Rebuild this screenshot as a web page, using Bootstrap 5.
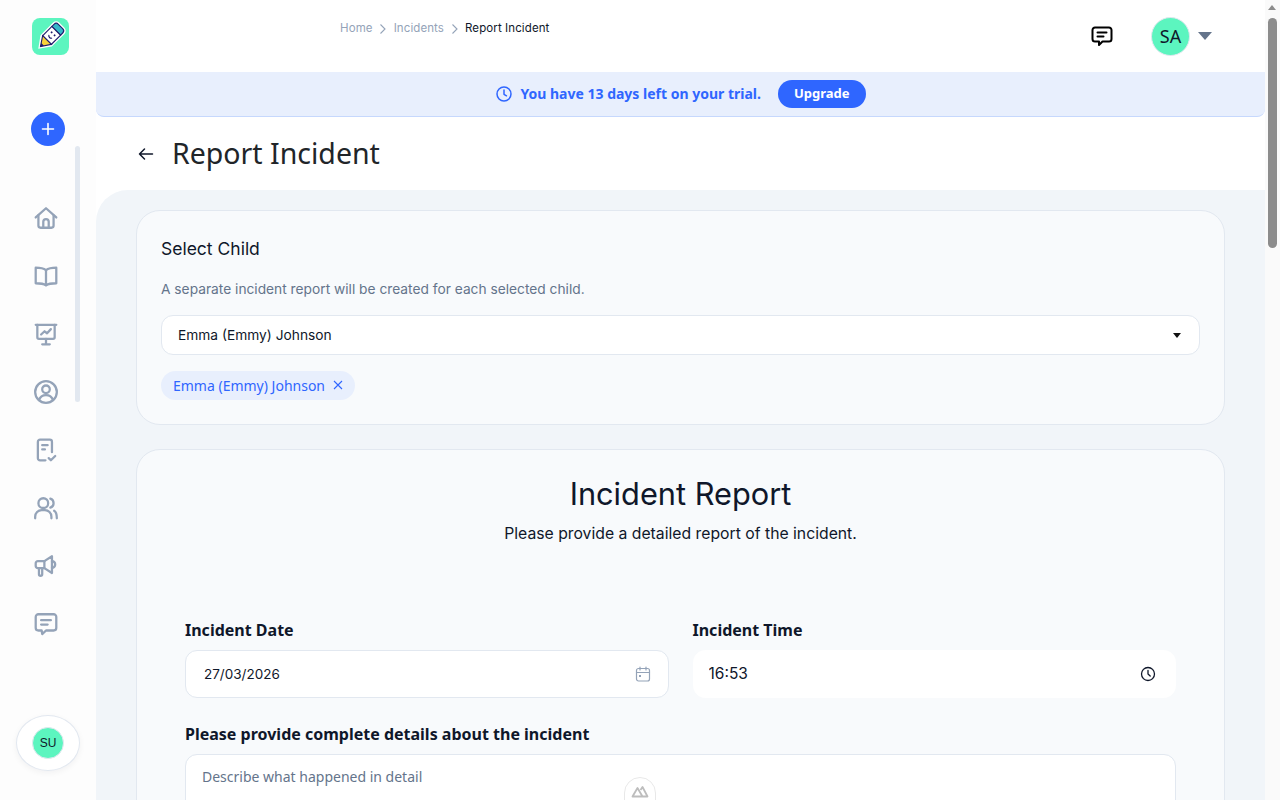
<!DOCTYPE html>
<html lang="en">
<head>
    <meta charset="UTF-8" />
    <meta name="viewport" content="width=device-width, initial-scale=1" />
    <title>Report Incident</title>
    <link rel="stylesheet" href="https://cdn.jsdelivr.net/npm/bootstrap@5.3.0/dist/css/bootstrap.min.css" />
    <style>
        body {
          background: #fff;
          font-family: 'Noto Sans', sans-serif;
          color: #0f172a;
          padding-right: 15px;
        }

        .rail {
          width: 96px;
          height: 100vh;
          position: sticky;
          top: 0;
          background: #fdfdfd;
          flex-shrink: 0;
        }

        .rail-logo {
          width: 37px;
          height: 37px;
          margin: 18px 0 0 32px;
          border-radius: 8px;
          background: #5cf5bf;
        }

        .rail-add {
          width: 34px;
          height: 34px;
          margin: 57px 0 0 31px;
          border: 0;
          border-radius: 50%;
          background: #2f66ff;
        }

        .rail-track {
          position: absolute;
          left: 75px;
          top: 146px;
          width: 5px;
          height: 256px;
          border-radius: 3px;
          background: #e2e8f0;
        }

        .rail-icons {
          margin-top: 59px;
          padding-left: 33px;
          gap: 32px;
        }

        .rail-icons svg {
          width: 26px;
          height: 26px;
          display: block;
          fill: none;
          stroke: #94a3b8;
          stroke-width: 2.1;
          stroke-linecap: round;
          stroke-linejoin: round;
        }

        .rail-user {
          position: absolute;
          left: 16px;
          top: 715px;
          width: 64px;
          height: 56px;
          border: 1px solid #e2e8f0;
          border-radius: 50%;
          background: #fff;
          box-shadow: 0 2px 6px rgba(15, 23, 42, 0.05);
        }

        .mint-dot {
          border-radius: 50%;
          background: #5cf5bf;
          color: #0f172a;
          border: 1px solid #e2e8f0;
        }

        .mint-sm {
          width: 32px;
          height: 32px;
          font: 12px 'Liberation Sans', sans-serif;
        }

        .mint-lg {
          width: 39px;
          height: 39px;
          font-size: 18px;
        }

        .main-col {
          min-width: 0;
        }

        .topbar {
          height: 72px;
          padding-left: 244px;
        }

        .crumbs {
          font-family: Inter, sans-serif;
          font-size: 11.5px;
          letter-spacing: .1px;
          color: #94a3b8;
          margin-top: -16px;
          padding-top: 2px;
          gap: 3.5px;
        }

        .crumbs b {
          font-weight: 400;
          color: #0f172a;
        }

        .topbar-tools {
          margin-left: auto;
          padding-right: 53px;
        }

        .chat-top {
          margin-right: 37px;
        }

        .caret-down {
          width: 0;
          height: 0;
          border-left: 7px solid transparent;
          border-right: 7px solid transparent;
          border-top: 8px solid #64748b;
          margin-left: 8px;
        }

        .trial {
          height: 45px;
          padding-left: 1px;
          background: #e8effd;
          border-bottom: 1px solid #c6d8fd;
          border-radius: 0 0 8px 8px;
          color: #2f66ff;
          font-size: 14px;
          font-weight: 700;
        }

        .trial span {
          margin-top: -1px;
        }

        .btn-upgrade {
          --bs-btn-bg: #2f66ff;
          --bs-btn-color: #fff;
          --bs-btn-hover-bg: #2f66ff;
          --bs-btn-hover-color: #fff;
          --bs-btn-border-width: 0;
          --bs-btn-padding-x: 16px;
          --bs-btn-padding-y: 0;
          --bs-btn-font-size: 13px;
          --bs-btn-font-weight: 700;
          --bs-btn-border-radius: 14px;
          height: 28px;
          margin-left: 17px;
        }

        .page-head {
          height: 73px;
          padding-left: 42px;
        }

        .page-head h1 {
          font-size: 28.5px;
          font-weight: 400;
          color: #212529;
          margin: 0 0 0 18px;
        }

        .panel {
          background: #f1f5f9;
          border-radius: 32px 0 0 0;
          padding: 20px 40px 40px;
        }

        .sheet {
          background: #f8fafc;
          border: 1px solid #e2e8f0;
          border-radius: 24px;
        }

        .sheet-child {
          height: 215px;
          padding: 27px 24px 0;
          margin-bottom: 24px;
        }

        .sheet-form {
          min-height: 2150px;
          padding: 24px 48px;
        }

        .dm {
          font-family: Inter, sans-serif;
        }

        .sheet-title {
          font-size: 17.5px;
          font-weight: 400;
          margin: 0;
        }

        .sheet-hint {
          font-size: 13.75px;
          color: #64748b;
          margin: 20px 0 15px;
        }

        .field-box {
          height: 40px;
          padding: 1px 16px 0;
          background: #fff;
          border: 1px solid #e2e8f0;
          border-radius: 12px;
          font-size: 13.75px;
        }

        .caret-small {
          width: 0;
          height: 0;
          border-left: 4px solid transparent;
          border-right: 4px solid transparent;
          border-top: 5px solid #111;
          margin-right: 2px;
        }

        .chip-child {
          height: 29px;
          margin-top: 16px;
          padding: 0 12px;
          border-radius: 15px;
          background: #e8effd;
          color: #2f66ff;
          font-size: 14px;
          gap: 8px;
        }

        .form-title {
          font-size: 30.75px;
          font-weight: 400;
          line-height: 40px;
          margin: 0;
          text-align: center;
        }

        .form-sub {
          font-size: 15.75px;
          text-align: center;
          margin: 8px 0 73px;
        }

        .field-label {
          font-size: 16px;
          font-weight: 700;
          line-height: 22px;
          margin-bottom: 9px;
          color: #0f172a;
        }

        .field-input {
          height: 48px;
          background: #fff;
          border: 1px solid #e2e8f0;
          border-radius: 12px;
          padding: 0 17px 0 18px;
        }

        .field-input input {
          border: 0;
          outline: 0;
          background: transparent;
          font-family: Inter, sans-serif;
          font-size: 13.5px;
          color: #0f172a;
          flex: 1;
          min-width: 0;
          padding: 0;
        }

        .field-time {
          border-color: #fff;
          padding-left: 15px;
          padding-right: 19px;
        }

        .field-time input {
          font-size: 15.5px;
        }

        .details-col {
          margin-top: 25px;
        }

        .details-area {
          height: 200px;
          resize: none;
          border: 1px solid #e2e8f0;
          border-radius: 12px;
          padding: 11px 16px;
          font-size: 14px;
        }

        .details-area::placeholder {
          color: #64748b;
          opacity: 1;
        }

        .nuxt-tab {
          position: fixed;
          left: 624px;
          top: 777px;
          width: 32px;
          height: 40px;
          border-radius: 16px;
          background: #fff;
          border: 1px solid #e8e8e8;
          padding-top: 7px;
        }

        .nuxt-tab svg {
          display: block;
          margin: 0 auto;
        }

        .page-scroll {
          position: fixed;
          top: 0;
          right: 0;
          width: 15px;
          height: 100vh;
          background: #fafafa;
        }

        .page-scroll-arrow {
          width: 0;
          height: 0;
          margin: 5px 0 0 3px;
          border-left: 4.500px solid transparent;
          border-right: 4.500px solid transparent;
          border-bottom: 5px solid #8c8c8c;
        }

        .page-scroll-thumb {
          width: 9px;
          height: 230px;
          margin: 8px 0 0 3px;
          border-radius: 5px;
          background: #8c8c8c;
        }
    </style>
</head>
<body>
<div class="d-flex">

    <!-- Sidebar -->
    <aside class="rail">
        <div class="rail-logo d-flex align-items-center justify-content-center">
            <svg width="37" height="37" viewBox="0 0 30 30">
                <g transform="rotate(45 15 15)">
                    <path d="M8.500 5.500A3.500 3.500 0 0 1 12 2h6a3.500 3.500 0 0 1 3.500 3.500V20L15 29l-6.500-9z" fill="#fff"/>
                    <path d="M10 6a2.500 2.500 0 0 1 2.500-2.500h5A2.500 2.500 0 0 1 20 6v2.500H10z" fill="#35b6c9" stroke="#1e1b6b" stroke-width=".9"/>
                    <rect x="10" y="8.500" width="10" height="10.500" fill="#fff" stroke="#1e1b6b" stroke-width=".9"/>
                    <path d="M10 19h10l-5 7.500z" fill="#f7d23a" stroke="#1e1b6b" stroke-width=".9"/>
                    <path d="M13.500 24l1.500 3 1.500-3z" fill="#1e1b6b"/>
                    <circle cx="13.300" cy="12" r=".8" fill="#1e1b6b"/>
                    <circle cx="16.700" cy="12" r=".8" fill="#1e1b6b"/>
                    <path d="M13.200 15a2 2 0 0 0 3.600 0" fill="none" stroke="#1e1b6b" stroke-width=".9"/>
                </g>
            </svg>
        </div>
        <button class="rail-add d-flex align-items-center justify-content-center p-0" aria-label="Add">
            <svg width="14" height="14" viewBox="0 0 14 14"><path d="M7 1.500v11M1.500 7h11" stroke="#fff" stroke-width="1.600" stroke-linecap="round"/></svg>
        </button>
        <div class="rail-track"></div>
        <nav class="rail-icons d-flex flex-column">
            <svg viewBox="0 0 24 24"><path d="M2.500 11.500 12 3l9.500 8.500"/><path d="M5 9.500V19a2 2 0 0 0 2 2h10a2 2 0 0 0 2-2V9.500"/><path d="M9.500 21v-5.500a2.500 2.500 0 0 1 5 0V21"/></svg>
            <svg viewBox="0 0 24 24"><path d="M12 6.500C10 5 7 4.300 2.500 4.300v14.400c4.500 0 7.500.5 9.500 2 2-1.500 5-2 9.500-2V4.300C17 4.300 14 5 12 6.500z"/><path d="M12 6.500v14"/></svg>
            <svg viewBox="0 0 24 24"><path d="M2.500 3.500h19"/><path d="M4 3.500V15a1.500 1.500 0 0 0 1.500 1.500h13A1.500 1.500 0 0 0 20 15V3.500"/><path d="M12 16.500v5M8.500 21.500h7"/><path d="M7.500 12.500l3.200-3 2.300 1.800 3.500-3.800"/></svg>
            <svg viewBox="0 0 24 24"><circle cx="12" cy="12" r="10"/><circle cx="12" cy="9.500" r="3.500"/><path d="M5.500 19.500c1-3 3.500-4.700 6.500-4.700s5.500 1.700 6.500 4.700"/></svg>
            <svg viewBox="0 0 24 24"><path d="M11.500 21.500H6.500a2 2 0 0 1-2-2v-15a2 2 0 0 1 2-2h9a2 2 0 0 1 2 2v9.500"/><path d="M8.500 7.500h5M8.500 11.500h2.500"/><path d="M14.500 19.500l2 2 4-4"/></svg>
            <svg viewBox="0 0 24 24"><circle cx="9.500" cy="7.500" r="4.500"/><path d="M2 21.500V20a6 6 0 0 1 6-6h3a6 6 0 0 1 6 6v1.500"/><path d="M16 3.300c1.900.6 3 2.200 3 4.200s-1.100 3.600-3 4.200"/><path d="M19.500 14.500c1.800 1 2.500 3 2.500 7"/></svg>
            <svg viewBox="0 0 24 24"><path d="M2.500 9.500a2 2 0 0 1 2-2h6l7-4.500v15.500l-7-4.500h-6a2 2 0 0 1-2-2z"/><path d="M5.500 14v5.500a1.500 1.500 0 0 0 3 0V14"/><path d="M10.500 7.500V14"/><path d="M17.500 7.500a3 3 0 0 1 3 3.200 3 3 0 0 1-3 3"/></svg>
            <svg viewBox="0 0 24 24"><path d="M5 3h14a2.500 2.500 0 0 1 2.500 2.500v10A2.500 2.500 0 0 1 19 18h-7l-3.500 3.300-.5-3.300H5a2.500 2.500 0 0 1-2.500-2.500v-10A2.500 2.500 0 0 1 5 3z"/><path d="M7.500 8.500h9M7.500 12.500h6"/></svg>
        </nav>
        <div class="rail-user d-flex align-items-center justify-content-center">
            <div class="mint-dot mint-sm d-flex align-items-center justify-content-center">SU</div>
        </div>
    </aside>

    <div class="main-col flex-grow-1">
        <!-- Top bar -->
        <header class="topbar d-flex align-items-center">
            <div class="crumbs d-flex align-items-center">
                <span>Home</span>
                <svg width="14" height="12" viewBox="0 0 14 12"><path d="M4.500 1.500 9 6l-4.500 4.500" fill="none" stroke="#94a3b8" stroke-width="1.100"/></svg>
                <span>Incidents</span>
                <svg width="14" height="12" viewBox="0 0 14 12"><path d="M4.500 1.500 9 6l-4.500 4.500" fill="none" stroke="#94a3b8" stroke-width="1.100"/></svg>
                <b>Report Incident</b>
            </div>
            <div class="topbar-tools d-flex align-items-center">
                <svg class="chat-top" width="24" height="24" viewBox="0 0 24 24" fill="none" stroke="#000" stroke-width="2" stroke-linecap="round" stroke-linejoin="round"><path d="M5 3.500h14A2.500 2.500 0 0 1 21.500 6v9a2.500 2.500 0 0 1-2.500 2.500h-6.500L9 21v-3.500H5A2.500 2.500 0 0 1 2.500 15V6A2.500 2.500 0 0 1 5 3.500z"/><path d="M7.500 8.500h9M7.500 12.500h6"/></svg>
                <div class="mint-dot mint-lg d-flex align-items-center justify-content-center">SA</div>
                <span class="caret-down"></span>
            </div>
        </header>

        <!-- Trial banner -->
        <div class="trial d-flex align-items-center justify-content-center">
            <svg class="me-2" width="16" height="16" viewBox="0 0 16 16" fill="none" stroke="#2f66ff" stroke-width="1.500" stroke-linecap="round" stroke-linejoin="round"><circle cx="8" cy="8" r="7"/><path d="M8 4v4.300l2.500 1.500"/></svg>
            <span>You have 13 days left on your trial.</span>
            <button class="btn btn-upgrade">Upgrade</button>
        </div>

        <!-- Heading -->
        <div class="page-head d-flex align-items-center">
            <svg width="16" height="16" viewBox="0 0 16 16" fill="none" stroke="#0f172a" stroke-width="1.500" stroke-linecap="round" stroke-linejoin="round"><path d="M14.500 8h-13M6.500 3l-5 5 5 5"/></svg>
            <h1>Report Incident</h1>
        </div>

        <main class="panel">
            <section class="sheet sheet-child">
                <h2 class="sheet-title dm">Select Child</h2>
                <p class="sheet-hint dm">A separate incident report will be created for each selected child.</p>
                <div class="field-box dm d-flex align-items-center justify-content-between">
                    <span>Emma (Emmy) Johnson</span>
                    <span class="caret-small"></span>
                </div>
                <div class="chip-child d-inline-flex align-items-center">
                    <span>Emma (Emmy) Johnson</span>
                    <svg width="10" height="10" viewBox="0 0 10 10"><path d="M1 1l8 8M9 1l-8 8" stroke="#2f66ff" stroke-width="1.100"/></svg>
                </div>
            </section>

            <section class="sheet sheet-form">
                <h2 class="form-title dm">Incident Report</h2>
                <p class="form-sub dm">Please provide a detailed report of the incident.</p>
                <div class="row gx-4 gy-0">
                    <div class="col-6">
                        <label class="field-label d-block" for="incident-date">Incident Date</label>
                        <div class="field-input d-flex align-items-center">
                            <input id="incident-date" type="text" value="27/03/2026" />
                            <svg width="16" height="16" viewBox="0 0 16 16" fill="none" stroke="#94a3b8" stroke-width="1.200" stroke-linecap="round"><rect x="1.500" y="2.500" width="13" height="12.500" rx="2"/><path d="M1.500 6.500h13M5 1v3M11 1v3"/><rect x="4" y="9" width="2" height="2" fill="#94a3b8" stroke="none"/></svg>
                        </div>
                    </div>
                    <div class="col-6">
                        <label class="field-label d-block" for="incident-time">Incident Time</label>
                        <div class="field-input field-time d-flex align-items-center">
                            <input id="incident-time" type="text" value="16:53" />
                            <svg width="16" height="16" viewBox="0 0 16 16" fill="none" stroke="#0f172a" stroke-width="1.300" stroke-linecap="round" stroke-linejoin="round"><circle cx="8" cy="8" r="6.500"/><path d="M8 4.500V8l2.200 2"/></svg>
                        </div>
                    </div>
                    <div class="col-12 details-col">
                        <label class="field-label d-block" for="incident-details">Please provide complete details about the incident</label>
                        <textarea id="incident-details" class="form-control details-area" placeholder="Describe what happened in detail"></textarea>
                    </div>
                </div>
            </section>
        </main>
    </div>
</div>

<!-- Nuxt devtools tab -->
<div class="nuxt-tab">
    <svg width="18" height="13" viewBox="0 0 18 13" fill="none" stroke="#bdbdbd" stroke-width="1.800" stroke-linejoin="round"><path d="M1.500 11.500 6.500 3l5 8.500zM9.500 5l2-3 5 9.500h-5"/></svg>
</div>

<!-- Page scrollbar -->
<div class="page-scroll">
    <div class="page-scroll-arrow"></div>
    <div class="page-scroll-thumb"></div>
</div>

<script src="https://cdn.jsdelivr.net/npm/bootstrap@5.3.0/dist/js/bootstrap.bundle.min.js"></script>
</body>
</html>
